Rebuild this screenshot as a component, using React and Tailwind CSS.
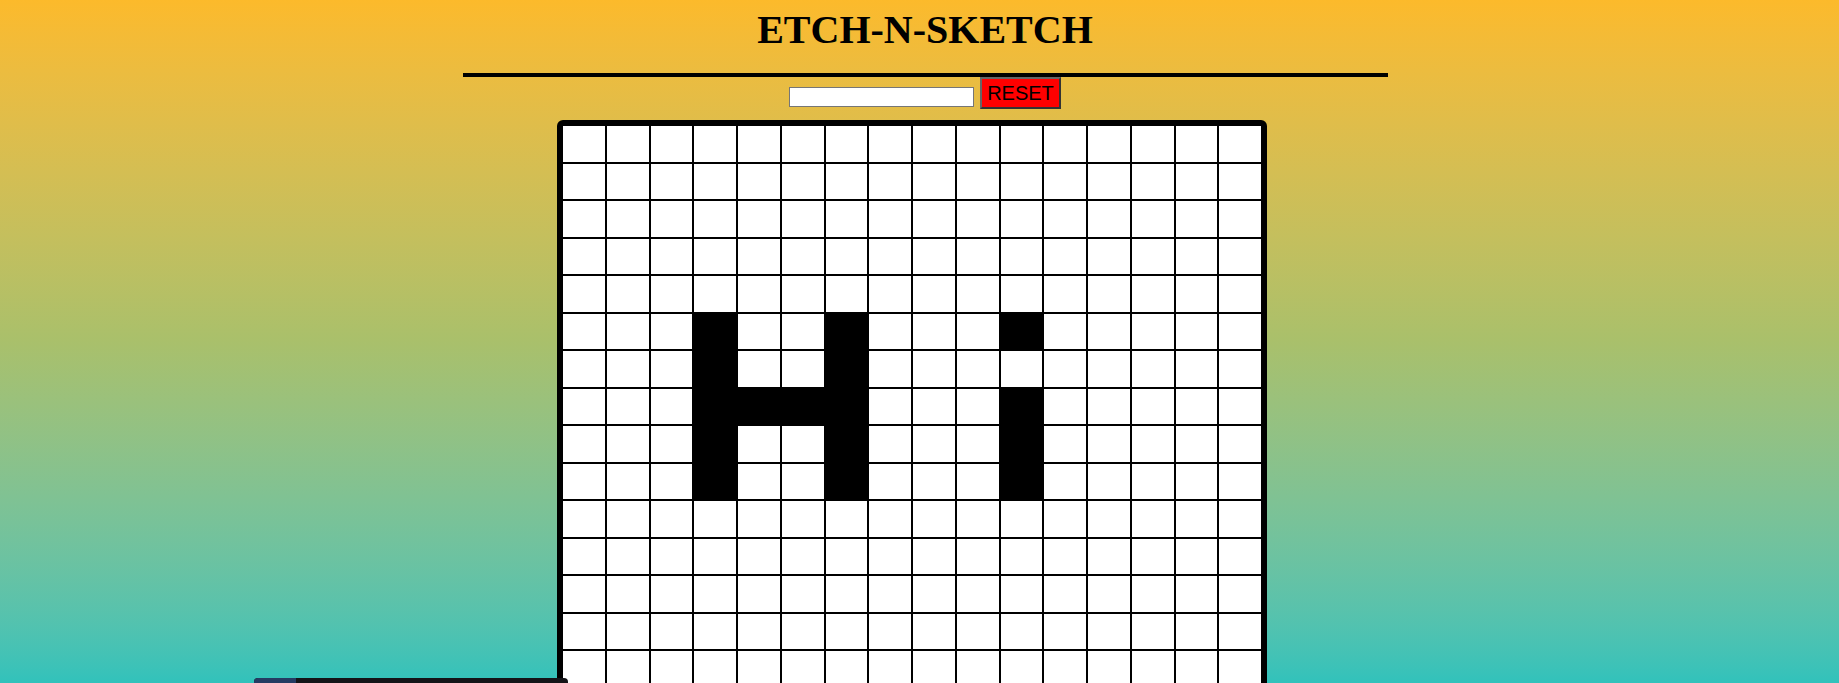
import React from 'react';

const ROWS = 16;
const COLS = 16;

// cells painted black in the reference ("Hi")
const inked = new Set([
    // H
    '5-3', '6-3', '7-3', '8-3', '9-3',
    '5-6', '6-6', '7-6', '8-6', '9-6',
    '7-4', '7-5',
    // i
    '5-10', '7-10', '8-10', '9-10',
]);

function Cell({ filled }) {
    return (
        <div className={`border border-black ${filled ? 'bg-black' : 'bg-white'}`} />
    );
}

export default function App() {
    const cells = [];
    for (let r = 0; r < ROWS; r++) {
        for (let c = 0; c < COLS; c++) {
            cells.push(<Cell key={`${r}-${c}`} filled={inked.has(`${r}-${c}`)} />);
        }
    }

    return (
        <div className="relative h-[683px] w-full overflow-hidden bg-gradient-to-b from-[#fcba2b] via-[#a9c06b] to-[#31c2bb]">
            <div className="w-[1850px] flex flex-col items-center">
                <h1
                    className="pt-[7px] text-[40px] leading-[46px] font-bold text-black"
                    style={{ fontFamily: '"Liberation Serif", "Times New Roman", serif' }}
                >
                    ETCH-N-SKETCH
                </h1>
                <div className="mt-[20px] h-[4px] w-[925px] bg-black" />
                <div className="flex items-start gap-[6px]">
                    <input
                        type="text"
                        className="mt-[10px] h-[20px] w-[185px] border border-[#767676] bg-white px-1 text-[13px] outline-none"
                    />
                    <button
                        className="h-[32px] w-[81px] border-2 border-t-[#666666] border-l-[#666666] border-r-[#333333] border-b-[#333333] bg-[#ff0000] text-[20px] leading-none text-black"
                        style={{ fontFamily: '"Liberation Sans", Arial, sans-serif' }}
                    >
                        RESET
                    </button>
                </div>
            </div>
            <div className="ml-[557px] mt-[11px] h-[610px] w-[710px] rounded-[6px] border-[5px] border-black bg-white grid grid-cols-[repeat(16,1fr)] grid-rows-[repeat(16,1fr)]">
                {cells}
            </div>
            <div className="absolute left-[254px] top-[678px] flex h-[12px] w-[314px] overflow-hidden rounded-t-[4px] bg-[#141418]">
                <div className="h-full w-[42px] bg-[#253b63]" />
            </div>
        </div>
    );
}
